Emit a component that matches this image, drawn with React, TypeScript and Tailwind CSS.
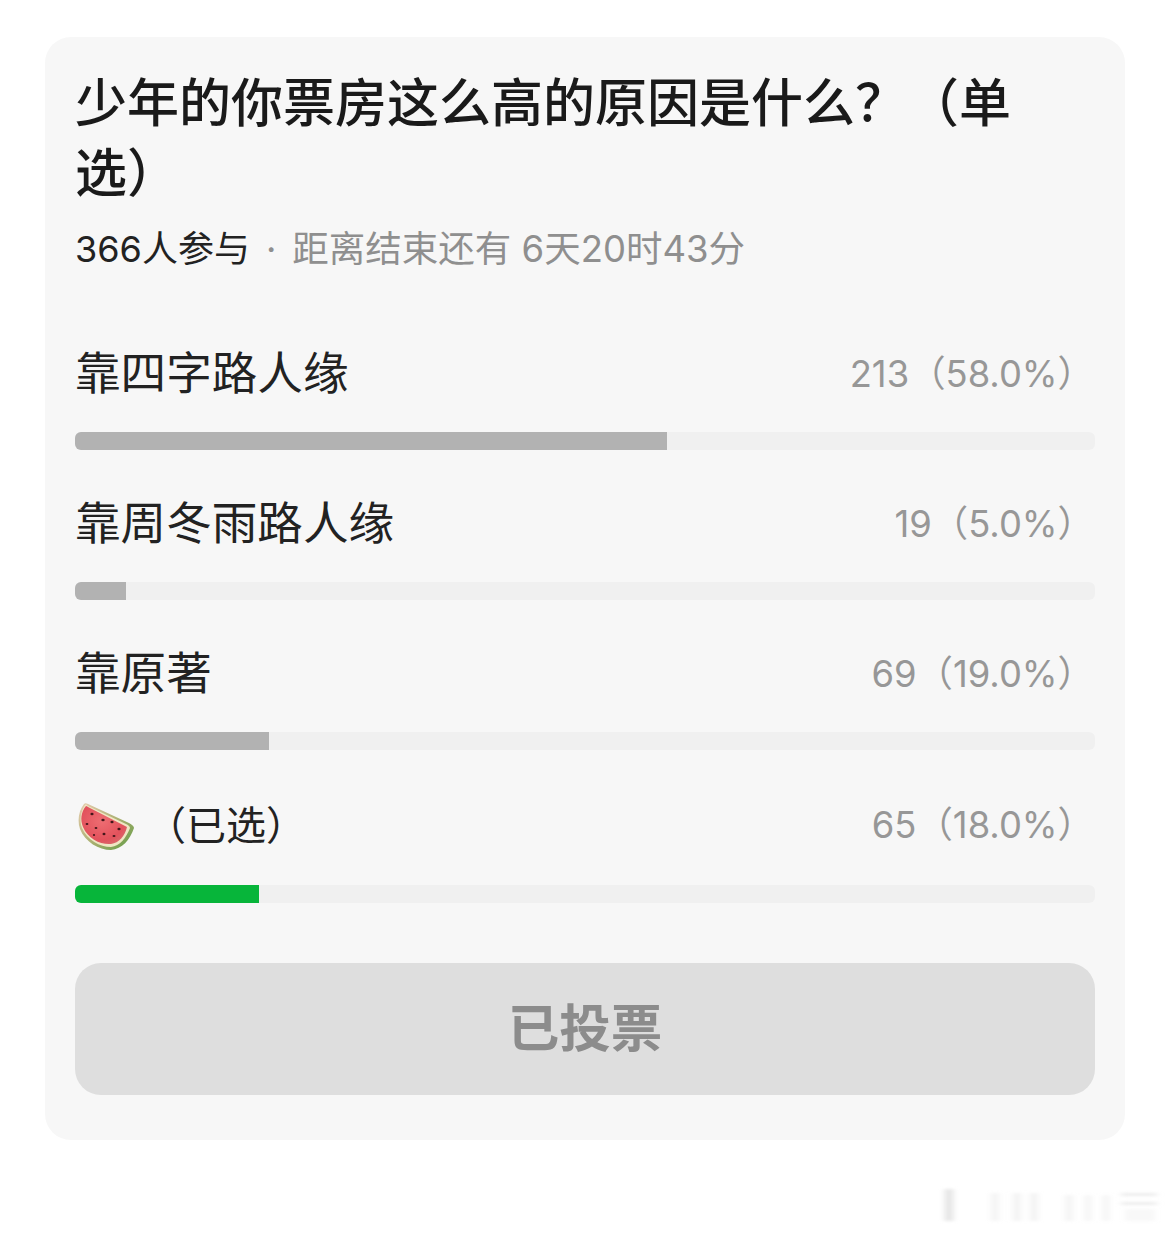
const FONT = "font-['Inter','Noto_Sans_CJK_SC',sans-serif]";

const OPTIONS = [
  { label: "靠四字路人缘", stat: "213（58.0%）", width: 592 },
  { label: "靠周冬雨路人缘", stat: "19（5.0%）", width: 51 },
  { label: "靠原著", stat: "69（19.0%）", width: 194 },
];

function Watermelon() {
  return (
    <svg width="58" height="48" viewBox="0 0 58 48" className="ml-[3px] shrink-0">
      <defs>
        <radialGradient id="flesh" cx="0.45" cy="0.4" r="0.65">
          <stop offset="0" stopColor="#ee6d72" />
          <stop offset="0.75" stopColor="#e2525c" />
          <stop offset="1" stopColor="#d9676a" />
        </radialGradient>
        <linearGradient id="rind" x1="0" y1="0" x2="1" y2="1">
          <stop offset="0" stopColor="#e8cdb0" />
          <stop offset="0.55" stopColor="#a8b070" />
          <stop offset="1" stopColor="#5f9a42" />
        </linearGradient>
      </defs>
      <path d="M6 1 C1 7 -1 17 2 26 C7 39 21 47 33 47 C44 46 52 37 56 25 C56 23 54 22 51 20 L10 1 C8 0 7 0 6 1Z" fill="url(#rind)" />
      <path d="M7 2 C3 8 1 17 4 25 C9 37 22 44 33 44 C42 43 48 35 52 25 C52 23 50 22 48 21 L10 3 C9 2 8 1 7 2Z" fill="#efe6c4" />
      <path d="M8 3 C3 9 2 17 5 24 C10 36 23 42 33 41 C41 40 47 33 49 24 L10 4 C9 3 8 3 8 3Z" fill="url(#flesh)" />
      <g fill="#43161a">
        <ellipse cx="14" cy="11" rx="1.6" ry="1.3" />
        <ellipse cx="9" cy="21" rx="1.4" ry="1.1" />
        <ellipse cx="25" cy="17" rx="1.7" ry="1.3" />
        <ellipse cx="34" cy="19" rx="1.6" ry="1.3" />
        <ellipse cx="18" cy="25" rx="1.4" ry="1.1" />
        <ellipse cx="41" cy="26" rx="1.6" ry="1.2" />
        <ellipse cx="26" cy="31" rx="1.5" ry="1.2" />
        <ellipse cx="36" cy="33" rx="1.5" ry="1.1" />
        <ellipse cx="16" cy="32" rx="1.1" ry="0.9" />
      </g>
    </svg>
  );
}

function Bar({ width, color }: { width: number; color: string }) {
  return (
    <div className="mt-7 h-[18px] overflow-hidden rounded-md bg-[#f0f0f0]">
      <div className={`h-full ${color}`} style={{ width }} />
    </div>
  );
}

export default function App() {
  return (
    <div className={`relative h-[1233px] overflow-hidden bg-white px-[45px] pt-[37px] ${FONT}`}>
      <div className="h-[1103px] rounded-[26px] bg-[#f7f7f7] px-[30px] pt-[30px]">
        <h1 className="max-w-[960px] pt-[2px] text-[52px] leading-[70px] font-medium text-[#1a1a1a]">
          少年的你票房这么高的原因是什么？（单选）
        </h1>
        <div className="mt-[15px] flex h-[50px] items-center text-[36px] text-[#8f8f8f]">
          <span className="text-[#222]">366人参与</span>
          <span className="mx-[16px]">·</span>
          <span className="text-[36.5px]">距离结束还有 6天20时43分</span>
        </div>

        <div className="mt-[70px] flex flex-col gap-[44px]">
          {OPTIONS.map((o) => (
            <div key={o.label}>
              <div className="flex h-[60px] items-center justify-between">
                <span className="text-[45.6px] text-[#222]">{o.label}</span>
                <span className="pr-[1px] text-[36.4px] text-[#979797]">{o.stat}</span>
              </div>
              <Bar width={o.width} color="bg-[#b2b2b2]" />
            </div>
          ))}
          <div>
            <div className="flex h-[63px] items-center justify-between">
              <span className="flex items-center text-[40px] text-[#222]">
                <span className="pt-[2px]">
                  <Watermelon />
                </span>
                <span className="ml-[10px]">（已选）</span>
              </span>
              <span className="pr-[1px] text-[36.4px] text-[#979797]">65（18.0%）</span>
            </div>
            <Bar width={184} color="bg-[#07b53a]" />
          </div>
        </div>

        <button className="mt-[60px] flex h-[132px] w-full items-center justify-center rounded-[26px] bg-[#dedede] text-[51.5px] font-semibold text-[#8c8c8c]">
          已投票
        </button>
      </div>

      {/* blurred watermark, bottom right */}
      <svg width="230" height="56" viewBox="0 0 230 56" className="absolute top-[1175px] left-[935px]">
        <defs>
          <filter id="wm" x="-20%" y="-30%" width="140%" height="160%">
            <feGaussianBlur stdDeviation="3 1.5" />
          </filter>
        </defs>
        <g filter="url(#wm)" fill="#dcdcdc">
          <rect x="10" y="14" width="8" height="32" opacity="0.8" />
          <rect x="56" y="18" width="8" height="28" opacity="0.3" />
          <rect x="78" y="18" width="8" height="28" opacity="0.35" />
          <rect x="95" y="18" width="8" height="28" opacity="0.35" />
          <rect x="130" y="20" width="8" height="26" opacity="0.3" />
          <rect x="150" y="20" width="6" height="26" opacity="0.3" />
          <rect x="168" y="20" width="6" height="26" opacity="0.3" />
          <rect x="186" y="18" width="36" height="3" opacity="0.5" />
          <rect x="186" y="27" width="36" height="3" opacity="0.5" />
          <rect x="190" y="34" width="30" height="12" opacity="0.2" />
        </g>
      </svg>
    </div>
  );
}
